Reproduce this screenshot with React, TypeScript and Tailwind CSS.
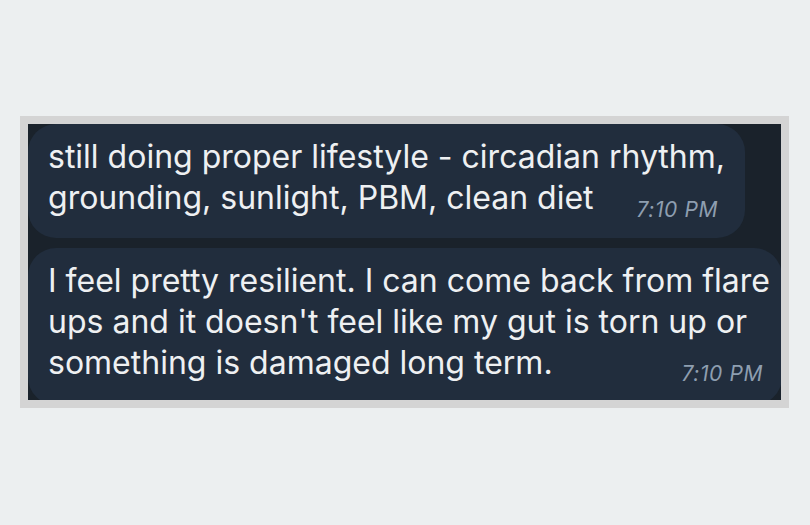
import React from 'react';

type Message = {
  lines: string[];
  time: string;
  width: string;
  height: string;
  padRight: string;
  timeLeading: string;
};

const messages: Message[] = [
  {
    lines: ['still doing proper lifestyle - circadian rhythm,', 'grounding, sunlight, PBM, clean diet'],
    time: '7:10 PM',
    width: 'w-[717px]',
    height: 'h-[114px]',
    padRight: 'pr-[27px]',
    timeLeading: 'leading-[17px]',
  },
  {
    lines: [
      'I feel pretty resilient. I can come back from flare',
      "ups and it doesn't feel like my gut is torn up or",
      'something is damaged long term.',
    ],
    time: '7:10 PM',
    width: 'w-[754px]',
    height: 'h-[157px]',
    padRight: 'pr-[19px]',
    timeLeading: 'leading-[19px]',
  },
];

const Bubble: React.FC<{ msg: Message }> = ({ msg }) => {
  const last = msg.lines.length - 1;
  return (
    <div
      className={`${msg.width} ${msg.height} shrink-0 rounded-[28px] bg-[#212d3d] pl-5 ${msg.padRight} pt-[12px] text-[32px] leading-[41px] text-[#eef0f2]`}
    >
      {msg.lines.slice(0, last).map((line) => (
        <div key={line} className="whitespace-nowrap">
          {line}
        </div>
      ))}
      <div className="flex items-end justify-between whitespace-nowrap">
        <span>{msg.lines[last]}</span>
        <span className={`text-[21px] tracking-[0.6px] italic ${msg.timeLeading} text-[#8e9eb0]`}>{msg.time}</span>
      </div>
    </div>
  );
};

export default function App() {
  return (
    <div
      className="h-[525px] w-[810px] bg-[#eceff0] pl-5 pt-[116px]"
      style={{ fontFamily: 'Inter, "Noto Sans", sans-serif' }}
    >
      <div className="h-[292px] w-[769px] overflow-hidden border-8 border-[#d4d4d4] bg-[#1a222b]">
        <div className="flex flex-col gap-[10px]">
          {messages.map((m, i) => (
            <Bubble key={i} msg={m} />
          ))}
        </div>
      </div>
    </div>
  );
}
